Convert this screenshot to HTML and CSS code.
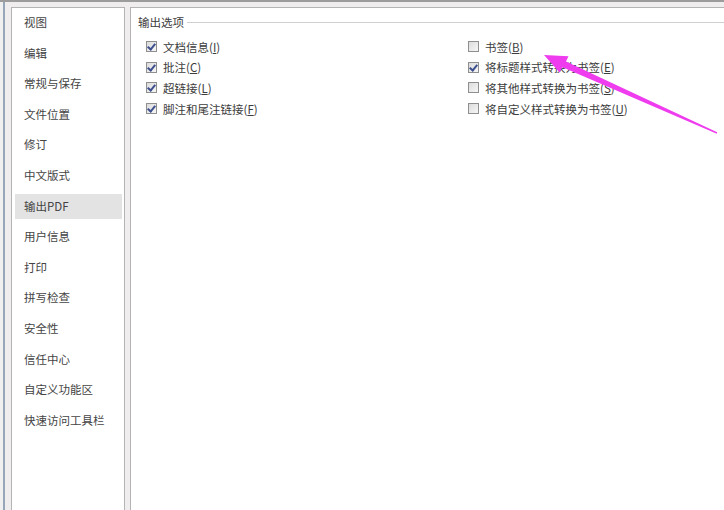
FILE: index.html
```html
<!DOCTYPE html>
<html lang="zh-CN">
<head>
<meta charset="utf-8">
<link rel="stylesheet" href="styles.css">
</head>
<body>
<div class="frame">
  <nav class="sidebar">
    <ul class="nav-list">
      <li class="nav-item">视图</li>
      <li class="nav-item">编辑</li>
      <li class="nav-item">常规与保存</li>
      <li class="nav-item">文件位置</li>
      <li class="nav-item">修订</li>
      <li class="nav-item">中文版式</li>
      <li class="nav-item active">输出PDF</li>
      <li class="nav-item">用户信息</li>
      <li class="nav-item">打印</li>
      <li class="nav-item">拼写检查</li>
      <li class="nav-item">安全性</li>
      <li class="nav-item">信任中心</li>
      <li class="nav-item">自定义功能区</li>
      <li class="nav-item">快速访问工具栏</li>
    </ul>
  </nav>
  <main class="content">
    <div class="group-title"><span class="group-label">输出选项</span><span class="group-line"></span></div>
    <div class="options">
      <div class="col">
        <label class="opt"><span class="cb checked"></span><span>文档信息(<u>I</u>)</span></label>
        <label class="opt"><span class="cb checked"></span><span>批注(<u>C</u>)</span></label>
        <label class="opt"><span class="cb checked"></span><span>超链接(<u>L</u>)</span></label>
        <label class="opt"><span class="cb checked"></span><span>脚注和尾注链接(<u>F</u>)</span></label>
      </div>
      <div class="col">
        <label class="opt"><span class="cb"></span><span>书签(<u>B</u>)</span></label>
        <label class="opt"><span class="cb checked"></span><span>将标题样式转换为书签(<u>E</u>)</span></label>
        <label class="opt"><span class="cb"></span><span>将其他样式转换为书签(<u>S</u>)</span></label>
        <label class="opt"><span class="cb"></span><span>将自定义样式转换为书签(<u>U</u>)</span></label>
      </div>
    </div>
  </main>
</div>
<svg class="arrow" width="724" height="510" viewBox="0 0 724 510">
  <polygon points="544,55 568.5,56.2 566,61.5 717.2,132.3 716.8,133.7 562.5,67.2 559.6,72.4" fill="#ee3cee"/>
</svg>
</body>
</html>
```
FILE: styles.css
```css
html, body {
  margin: 0;
  padding: 0;
  height: 100%;
}
body {
  background: #f0f0f0;
  font-family: "Noto Sans CJK SC", "Noto Sans", sans-serif;
  font-size: 11.5px;
  color: #3c3c3c;
  overflow: hidden;
  border-top: 2px solid #9c9c9c;
  box-sizing: border-box;
  padding-left: 3px;
}
.frame {
  display: flex;
  height: 100%;
  border-left: 2px solid #97a6b8;
  padding-left: 6px;
  padding-top: 5px;
  box-sizing: border-box;
  background: #efeded;
}
.sidebar {
  width: 112px;
  background: #fff;
  border: 1px solid #b4b4b4;
  border-bottom: none;
  flex: none;
}
.nav-list {
  list-style: none;
  margin: 0;
  padding: 2px 2px 0 3px;
  color: #444;
}
.nav-item {
  height: 25px;
  line-height: 25px;
  margin-bottom: 5.6px;
  padding-left: 9px;
  white-space: nowrap;
}
.nav-item.active {
  background: #e3e3e3;
}
.content {
  flex: 1;
  margin-left: 5px;
  background: #fff;
  border: 1px solid #b4b4b4;
  border-right: none;
  border-bottom: none;
  padding: 7px 0 0 7px;
}
.group-title {
  display: flex;
  align-items: center;
  height: 14px;
  line-height: 14px;
}
.group-label {
  flex: none;
  padding-right: 3px;
}
.group-line {
  flex: 1;
  height: 1px;
  background: #d0d0d0;
}
.options {
  display: flex;
  padding-left: 8px;
  margin-top: 7.5px;
}
.col {
  display: flex;
  flex-direction: column;
}
.col:first-child {
  width: 322px;
}
.opt {
  display: flex;
  align-items: center;
  height: 20.6px;
  white-space: nowrap;
}
.opt u {
  text-decoration: underline;
  text-underline-offset: 1px;
}
.cb {
  width: 9px;
  height: 9px;
  border: 1px solid #8f8f8f;
  background: linear-gradient(135deg, #dcdcdc, #f6f6f6);
  margin-right: 6px;
  flex: none;
  position: relative;
}
.cb.checked::after {
  content: "";
  position: absolute;
  left: 2px;
  top: 0px;
  width: 3px;
  height: 6px;
  border-right: 2px solid #3e4f8e;
  border-bottom: 2px solid #3e4f8e;
  transform: rotate(40deg);
}
.arrow {
  position: absolute;
  left: 0;
  top: 0;
  pointer-events: none;
}
```
